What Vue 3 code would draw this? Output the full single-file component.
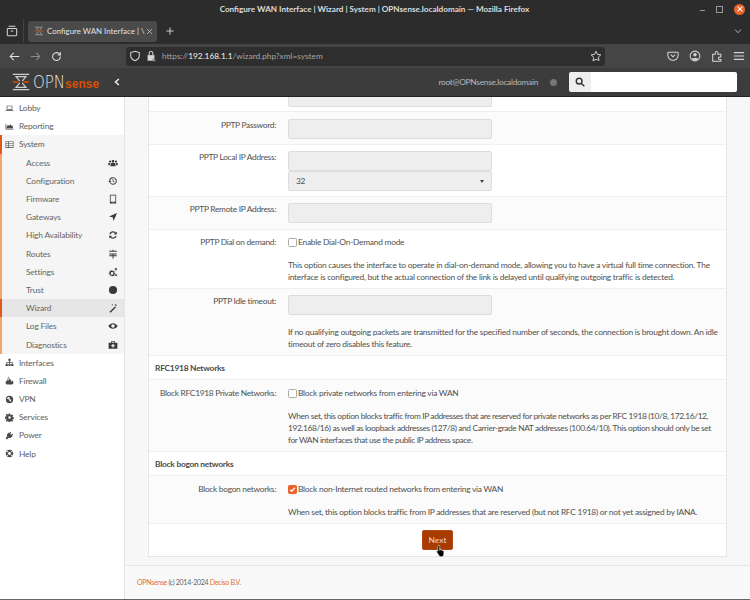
<script setup>
const menu = [
  { label: 'Lobby', icon: 'laptop' },
  { label: 'Reporting', icon: 'chart' },
  { label: 'System', icon: 'server', open: true }
]
const subItems = [
  { label: 'Access', icon: 'users' },
  { label: 'Configuration', icon: 'history' },
  { label: 'Firmware', icon: 'tablet' },
  { label: 'Gateways', icon: 'arrow' },
  { label: 'High Availability', icon: 'refresh' },
  { label: 'Routes', icon: 'routes' },
  { label: 'Settings', icon: 'cogs' },
  { label: 'Trust', icon: 'dot' },
  { label: 'Wizard', icon: 'wand', active: true },
  { label: 'Log Files', icon: 'eye' },
  { label: 'Diagnostics', icon: 'medkit' }
]
const bottomMenu = [
  { label: 'Interfaces', icon: 'sitemap' },
  { label: 'Firewall', icon: 'fire' },
  { label: 'VPN', icon: 'globe' },
  { label: 'Services', icon: 'cog' },
  { label: 'Power', icon: 'plug' },
  { label: 'Help', icon: 'lifering' }
]
const icons = {
  laptop: 'M3 3h10v7H3z M4.2 4.2v4.6h7.6V4.2z M1 11h14v1.4H1z',
  chart: 'M1 3h1.2v9H15v1.2H1z M3 11V8l2.5-3 2 2 2-3 2.5 2.5 2 .5V11z',
  server: 'M1 2h14v12H1z M2 3.2v2.4h3.4V3.2z M2 6.8v2.4h3.4V6.8z M2 10.4v2.4h3.4v-2.4z M6.6 3.2v2.4H14V3.2z M6.6 6.8v2.4H14V6.8z M6.6 10.4v2.4H14v-2.4z',
  users: 'M8 3a2.2 2.2 0 1 1 0 4.4A2.2 2.2 0 0 1 8 3z M3.3 4a1.7 1.7 0 1 1 0 3.4 1.7 1.7 0 0 1 0-3.4z M12.7 4a1.7 1.7 0 1 1 0 3.4 1.7 1.7 0 0 1 0-3.4z M5 8h6l1 2v3H4v-3z M0.5 8h3L3 10v1.5H0.5z M12.5 8h3v3.5H13V10z',
  history: 'M8 2a6 6 0 1 1-5 9.3l1.2-.9A4.5 4.5 0 1 0 3.5 8H5.6L3 10.8.4 8h1.6A6 6 0 0 1 8 2z M7.4 4.8h1.2v3l2 1.4-.7 1-2.5-1.8z',
  tablet: 'M3 1h10v14H3z M4.2 2.4v10h7.6v-10z M7.2 13h1.6v1H7.2z',
  arrow: 'M14.5 1.5 8.8 14.5 7.5 8.5 1.5 7.2z',
  refresh: 'M8 2a6 6 0 0 1 4.4 1.9L14 2.4V7H9.4l1.7-1.7A4 4 0 0 0 4.3 6.6H2.2A6 6 0 0 1 8 2z M2 9h4.6l-1.7 1.7a4 4 0 0 0 6.8-1.3h2.1A6 6 0 0 1 3.6 12.1L2 13.6z',
  routes: 'M7.2 1h1.6v1.6H14v1.6H2V2.6h5.2z M2 7h12v1.6H8.8V10H14v1.6H8.8V15H7.2v-3.4H2V10h5.2V8.6H2z',
  cogs: 'M6 5h1l.4 1.3 1.2.5 1.2-.6.8.8-.6 1.2.5 1.2 1.3.4v1l-1.3.4-.5 1.2.6 1.2-.8.8-1.2-.6-1.2.5L7 15H6l-.4-1.3-1.2-.5-1.2.6-.8-.8.6-1.2-.5-1.2-1.3-.4v-1l1.3-.4.5-1.2-.6-1.2.8-.8 1.2.6 1.2-.5z M6.5 8a2.2 2.2 0 1 0 0 4.4 2.2 2.2 0 0 0 0-4.4z M12.5 1.5a2 2 0 1 1 0 4 2 2 0 0 1 0-4z M12.5 2.7a.8.8 0 1 0 0 1.6.8.8 0 0 0 0-1.6z M13 11a1.8 1.8 0 1 1 0 3.6 1.8 1.8 0 0 1 0-3.6z M13 12.1a.7.7 0 1 0 0 1.4.7.7 0 0 0 0-1.400z',
  dot: 'M8 1.500a6.500 6.500 0 1 1 0 13 6.500 6.500 0 0 1 0-13z',
  wand: 'M11 5.600 12.600 7.200 4 15.400 2.400 13.800z M12.500 1l.7 1.600 1.600.7-1.600.7-.7 1.600-.7-1.600-1.600-.7 1.600-.7z M7 1.500l.4 1 1 .4-1 .4-.4 1-.4-1-1-.4 1-.4z',
  eye: 'M8 3.500c3.400 0 6 2.400 7.500 4.500-1.500 2.100-4.100 4.500-7.500 4.500S2 10.100.5 8C2 5.900 4.600 3.500 8 3.500z M8 5.200a2.800 2.800 0 1 0 0 5.600 2.800 2.800 0 0 0 0-5.600z',
  medkit: 'M5 2h6v2.200h4V14H1V4.200h4z M6.200 3.200v1h3.600v-1z M7 6.500v2H5v1.600h2v2h2v-2h2V8.500H9v-2z',
  sitemap: 'M6 1.500h4v3.500H8.700v2.200h4.800v3.300H15v3.500h-4v-3.500h1.300V8.400H8.700v2.100H10v3.500H6v-3.500h1.300V8.400H3.700v2.100H5v3.500H1v-3.500h1.500V7.200h4.800V5H6z',
  fire: 'M7 1c1 2-2 3.500-2 6 0 .8.300 1.400.8 1.800C5.500 6.800 7.500 5.500 8 4c1.500 1.500 3 3.500 3 5.500 0 .5-.1 1-.3 1.400C12 10 12.500 8.500 12 7c2 1.500 3 3 3 5 0 1.500-1 2.500-2.500 3h-9C2 14.500 1 13.500 1 12c0-2 2-4 3-5 0 1 .2 1.500.5 2C4 5.500 5 2.500 7 1z',
  globe: 'M8 1.500a6.500 6.500 0 1 1 0 13 6.500 6.500 0 0 1 0-13z M5 4 3.500 6l2 1.500 2 .5.5 2 1 2.500 2-3-.5-1.500-2-.5-1-2 1.500-1.500L7.500 3.500z',
  cog: 'M6.800 1h2.400l.4 2 1.500.6 1.700-1.100 1.700 1.700-1.100 1.700.6 1.500 2 .4v2.400l-2 .4-.6 1.500 1.100 1.700-1.700 1.700-1.700-1.100-1.500.6-.4 2H6.800l-.4-2-1.500-.6-1.700 1.100-1.700-1.700 1.100-1.700-.6-1.500-2-.4V6.800l2-.4.6-1.500-1.100-1.700 1.700-1.700 1.700 1.100 1.500-.6z M8 5.800a2.200 2.200 0 1 0 0 4.400 2.200 2.200 0 0 0 0-4.400z',
  plug: 'M10 1.500l1.200 1.200-2 2 2 2 2-2L14.500 6l-2 2 1 1-2.500 2.500c-1.500 1.300-3.300 1.300-4.500.5L3.500 15 1 12.500 4 9.500c-.8-1.200-.8-3 .5-4.500L7 2.500l1 1z',
  lifering: 'M8 1.500a6.500 6.500 0 1 1 0 13 6.500 6.500 0 0 1 0-13z M8 5.500a2.500 2.500 0 1 0 0 5 2.500 2.500 0 0 0 0-5z M3.500 3 2.500 4 5 6.300 6.300 5z M12.500 3 10 5.300 11 6.300 13.500 4z M5 9.700 2.500 12l1 1L6 10.700z M11 9.700 9.700 10.700 12.500 13l1-1z'
}
</script>

<template>
  <div class="window">
    <header class="titlebar">
      <span class="title">Configure WAN Interface | Wizard | System | OPNsense.localdomain — Mozilla Firefox</span>
      <div class="win-controls">
        <span class="win-min"></span>
        <span class="win-max"></span>
        <span class="win-close">
          <svg viewBox="0 0 10 10" width="8" height="8"><path d="M2 2l6 6M8 2l-6 6" stroke="#fff" stroke-width="1.3"/></svg>
        </span>
      </div>
    </header>

    <div class="tabbar">
      <div class="tab-view">
        <svg viewBox="0 0 14 14" width="12" height="12" fill="none" stroke="#d6d6d6" stroke-width="1.2">
          <rect x="1.5" y="4" width="11" height="8.5" rx="1"/>
          <path d="M3 1.5h8M5.5 7h3"/>
        </svg>
      </div>
      <div class="tab">
        <svg class="tab-logo" viewBox="0 0 16 16" width="10" height="10" fill="none">
          <path d="M2 2h12M2 14h12M4 3l3 4M12 3L9 7M4 13l3-4M12 13L9 9" stroke="#9a9a9a" stroke-width="1.5"/>
          <path d="M1 8h5M10 8h5" stroke="#d94f00" stroke-width="1.6"/>
        </svg>
        <span class="tab-label">Configure WAN Interface | \</span>
        <svg class="tab-x" viewBox="0 0 10 10" width="7" height="7" fill="none" stroke="#d6d6d6" stroke-width="1"><path d="M1.5 1.5l7 7M8.5 1.5l-7 7"/></svg>
      </div>
      <svg class="tab-new" viewBox="0 0 10 10" width="8" height="8" stroke="#e0e0e0" stroke-width="1.1"><path d="M5 .5v9M.5 5h9"/></svg>
      <svg class="tab-list" viewBox="0 0 12 12" width="8" height="8" fill="none" stroke="#d6d6d6" stroke-width="1.2"><path d="M1.5 4l4.500 4.500L10.500 4"/></svg>
    </div>

    <div class="navbar">
      <svg viewBox="0 0 14 14" width="11" height="11" fill="none" stroke="#e4e4e4" stroke-width="1.3"><path d="M13 7H1.5M6 2.500L1.500 7 6 11.500"/></svg>
      <svg class="nav-forward" viewBox="0 0 14 14" width="11" height="11" fill="none" stroke="#8a8a8a" stroke-width="1.3"><path d="M1 7h11.5M8 2.500L12.500 7 8 11.500"/></svg>
      <svg class="nav-reload" viewBox="0 0 14 14" width="11" height="11" fill="none" stroke="#e4e4e4" stroke-width="1.3"><path d="M12 7a5 5 0 1 1-1.500-3.500L12 5M12 1.500V5H8.500"/></svg>
      <div class="urlbar">
        <svg viewBox="0 0 14 14" width="12" height="12" fill="none" stroke="#d6d6d6" stroke-width="1.2"><path d="M7 1.500l5 1.500v3.500c0 3-2 5-5 6-3-1-5-3-5-6V3z"/></svg>
        <svg class="lock" viewBox="0 0 14 14" width="12" height="12"><path d="M3 6h8v6.500H3z" fill="#d6d6d6"/><path d="M4.800 6V4a2.200 2.200 0 0 1 4.400 0v2" fill="none" stroke="#d6d6d6" stroke-width="1.2"/><path d="M9 9l4 4H9z" fill="#8a8a8a"/></svg>
        <span class="url"><span class="url-dim">https://</span>192.168.1.1<span class="url-dim">/wizard.php?xml=system</span></span>
        <svg class="star" viewBox="0 0 14 14" width="12" height="12" fill="none" stroke="#d6d6d6" stroke-width="1.1"><path d="M7 1.500l1.700 3.600 3.900.5-2.900 2.700.8 3.900L7 10.800l-3.500 1.900.8-3.900L1.400 5.600l3.900-.5z"/></svg>
      </div>
      <div class="nav-tools">
        <svg viewBox="0 0 14 14" width="12" height="12" fill="none" stroke="#d6d6d6" stroke-width="1.2"><path d="M2 2.500h10a1 1 0 0 1 1 1V6a6 6 0 0 1-12 0V3.500a1 1 0 0 1 1-1z M4.500 5.500L7 8l2.500-2.500"/></svg>
        <svg viewBox="0 0 14 14" width="12" height="12"><circle cx="7" cy="7" r="5.700" fill="none" stroke="#d6d6d6" stroke-width="1.2"/><circle cx="7" cy="5.500" r="2" fill="#d6d6d6"/><path d="M3.300 10.500C4 8.800 10 8.800 10.700 10.500 9 12.300 5 12.300 3.300 10.500z" fill="#d6d6d6"/></svg>
        <svg viewBox="0 0 14 14" width="12" height="12" fill="none" stroke="#d6d6d6" stroke-width="1.2"><path d="M2 5h3V3.200a1.500 1.500 0 0 1 3 0V5h3.500v3.200H10a1.400 1.400 0 0 0 0 2.800h1.500V13H2z"/></svg>
        <svg viewBox="0 0 14 14" width="12" height="12" stroke="#d6d6d6" stroke-width="1.3"><path d="M1 3h12M1 7h12M1 11h12"/></svg>
      </div>
    </div>

    <div class="topbar">
      <div class="brand">
        <svg viewBox="0 0 22 20" width="18" height="18" preserveAspectRatio="none" fill="none">
          <path d="M1 1.500h20M1 18.500h20M4 4h14M4 16h14M5 4l4.500 5M17 4l-4.500 5M5 16l4.500-5M17 16l-4.500-5" stroke="#cfcfcf" stroke-width="1.5"/>
          <path d="M1 10h7M14 10h7" stroke="#d94f00" stroke-width="1.8"/>
        </svg>
        <span class="brand-opn">OPN</span><span class="brand-sense">sense</span>
      </div>
      <svg class="collapse" viewBox="0 0 8 10" width="6" height="8" fill="none" stroke="#eee" stroke-width="2"><path d="M6.500 1L2 5l4.500 4"/></svg>
      <span class="user">root@OPNsense.localdomain</span>
      <span class="status-dot"></span>
      <div class="search">
        <span class="search-addon">
          <svg viewBox="0 0 14 14" width="10" height="10" fill="none" stroke="#333" stroke-width="2"><circle cx="5.8" cy="5.8" r="4"/><path d="M9 9l4 4"/></svg>
        </span>
        <span class="search-input"></span>
      </div>
    </div>

    <div class="body">
      <aside class="sidebar">
        <div v-for="m in menu" :key="m.label" class="menu-item" :class="{ 'menu-open': m.open }">
          <svg class="menu-icon" viewBox="0 0 16 16" fill-rule="evenodd"><path :d="icons[m.icon]"/></svg>
          <span>{{ m.label }}</span>
        </div>
        <div class="submenu">
          <div v-for="s in subItems" :key="s.label" class="sub-item" :class="{ 'sub-active': s.active }">
            <span>{{ s.label }}</span>
            <svg class="sub-icon" viewBox="0 0 16 16" fill-rule="evenodd"><path :d="icons[s.icon]"/></svg>
          </div>
        </div>
        <div v-for="m in bottomMenu" :key="m.label" class="menu-item">
          <svg class="menu-icon" viewBox="0 0 16 16" fill-rule="evenodd"><path :d="icons[m.icon]"/></svg>
          <span>{{ m.label }}</span>
        </div>
      </aside>

      <main class="content">
        <section class="card">
          <div class="row row-cut">
            <div class="row-label"></div>
            <div class="row-field"><div class="input input-cut"></div></div>
          </div>
          <div class="row alt row-password">
            <div class="row-label">PPTP Password:</div>
            <div class="row-field"><div class="input"></div></div>
          </div>
          <div class="row">
            <div class="row-label">PPTP Local IP Address:</div>
            <div class="row-field">
              <div class="input"></div>
              <div class="input select"><span>32</span><i class="caret"></i></div>
            </div>
          </div>
          <div class="row alt row-remote">
            <div class="row-label">PPTP Remote IP Address:</div>
            <div class="row-field"><div class="input"></div></div>
          </div>
          <div class="row">
            <div class="row-label">PPTP Dial on demand:</div>
            <div class="row-field">
              <label class="check"><i class="box"></i>Enable Dial-On-Demand mode</label>
              <p class="help">This option causes the interface to operate in dial-on-demand mode, allowing you to have a virtual full time connection. The interface is configured, but the actual connection of the link is delayed until qualifying outgoing traffic is detected.</p>
            </div>
          </div>
          <div class="row alt">
            <div class="row-label">PPTP Idle timeout:</div>
            <div class="row-field">
              <div class="input"></div>
              <p class="help">If no qualifying outgoing packets are transmitted for the specified number of seconds, the connection is brought down. An idle timeout of zero disables this feature.</p>
            </div>
          </div>
          <h3 class="section">RFC1918 Networks</h3>
          <div class="row alt row-boxed">
            <div class="row-label">Block RFC1918 Private Networks:</div>
            <div class="row-field">
              <label class="check"><i class="box"></i>Block private networks from entering via WAN</label>
              <p class="help help-tight">When set, this option blocks traffic from IP addresses that are reserved for private networks as per RFC 1918 (10/8, 172.16/12,<br>192.168/16) as well as loopback addresses (127/8) and Carrier-grade NAT addresses (100.64/10). This option should only be set<br>for WAN interfaces that use the public IP address space.</p>
            </div>
          </div>
          <h3 class="section">Block bogon networks</h3>
          <div class="row alt row-boxed">
            <div class="row-label">Block bogon networks:</div>
            <div class="row-field">
              <label class="check"><i class="box box-on"><svg viewBox="0 0 10 10" width="7" height="7" fill="none" stroke="#fff" stroke-width="1.8"><path d="M1.500 5.200l2.300 2.300 4.700-5"/></svg></i>Block non-Internet routed networks from entering via WAN</label>
              <p class="help">When set, this option blocks traffic from IP addresses that are reserved (but not RFC 1918) or not yet assigned by IANA.</p>
            </div>
          </div>
          <div class="actions">
            <button class="next">Next</button>
            <svg class="pointer" viewBox="0 0 16 18" width="12" height="14"><path d="M5 1.500c.8 0 1.300.6 1.300 1.300V8l.6-.1V7c.9-.4 1.500 0 1.600.8.800-.4 1.500 0 1.600.8.900-.4 1.700 0 1.700 1V13c0 2-1 3.500-3 3.500H8c-1.500 0-2.300-.7-3-2L2 10c-.4-.8.500-1.700 1.500-1l.2.200V2.800c0-.7.500-1.300 1.300-1.300z" fill="#000" stroke="#fff" stroke-width=".8"/></svg>
          </div>
        </section>
        <footer class="foot"><a>OPNsense</a> (c) 2014-2024 <a>Deciso B.V.</a></footer>
      </main>
    </div>
  </div>
</template>

<style>
html, body { margin: 0; background: #f7f7f7; overflow: hidden; }
</style>

<style scoped>
.window {
  width: 750px;
  height: 600px;
  display: flex;
  flex-direction: column;
  overflow: hidden;
  box-sizing: border-box;
  border-bottom: 1px solid #666;
  font-family: Lato, "Noto Sans", sans-serif;
  font-size: 8.4px;
  letter-spacing: -0.25px;
  color: #505050;
}
svg { display: block; flex: none; }

.titlebar {
  height: 18px;
  flex: none;
  background: #2c2c2c;
  color: #dcdcdc;
  font-size: 8.3px;
  font-weight: 700;
  letter-spacing: 0;
  display: flex;
  align-items: center;
  justify-content: center;
  position: relative;
}
.title { font-size: 8.15px; margin-right: 1px; }
.win-controls {
  position: absolute;
  right: 5px;
  top: 0;
  height: 18px;
  display: flex;
  align-items: center;
  gap: 11px;
}
.win-min { width: 5px; height: 1px; background: #999; margin-top: 2px; }
.win-max { width: 5px; height: 5px; border: 1px solid #999; }
.win-close {
  width: 11px;
  height: 11px;
  border-radius: 50%;
  background: #e9622a;
  display: flex;
  align-items: center;
  justify-content: center;
}

.tabbar {
  height: 26px;
  flex: none;
  background: #2c2c2c;
  display: flex;
  align-items: center;
}
.tab-view {
  width: 24px;
  height: 24px;
  display: flex;
  align-items: center;
  justify-content: center;
  border-right: 1px solid #444;
  box-sizing: border-box;
}
.tab {
  width: 129px;
  height: 21px;
  margin-left: 4px;
  background: #4a4a4a;
  border-radius: 3px;
  display: flex;
  align-items: center;
  box-sizing: border-box;
  padding: 0 5px 0 6px;
  color: #e0e0e0;
  font-size: 7.9px;
  letter-spacing: 0;
}
.tab-label { margin-left: 3px; flex: 1; white-space: nowrap; }
.tab-x { margin-left: 1px; }
.tab-new { margin-left: 9px; }
.tab-list { margin-left: auto; margin-right: 8px; }

.navbar {
  height: 24px;
  flex: none;
  background: #454545;
  display: flex;
  align-items: center;
  padding: 0 0 0 9px;
  box-sizing: border-box;
}
.nav-forward { margin-left: 10px; }
.nav-reload { margin-left: 10px; }
.urlbar {
  width: 479px;
  height: 19px;
  margin-left: 64px;
  background: #2e2e2e;
  border-radius: 3px;
  display: flex;
  align-items: center;
  padding: 0 3px;
  box-sizing: border-box;
}
.lock { margin-left: 4px; }
.url {
  margin-left: 5px;
  color: #f0f0f0;
  font-size: 8.3px;
  letter-spacing: 0;
}
.url-dim { color: #a4a4a4; }
.star { margin-left: auto; }
.nav-tools {
  display: flex;
  gap: 10px;
  margin-left: 62px;
}

.topbar {
  height: 29px;
  flex: none;
  background: #3c3c3c;
  border-bottom: 1px solid #222;
  box-sizing: border-box;
  display: flex;
  align-items: center;
  color: #c8c8c8;
}
.brand {
  display: flex;
  align-items: center;
  margin-left: 12px;
  width: 93px;
  height: 20px;
}
.brand-opn {
  margin-left: 3px;
  font-family: "DejaVu Sans", sans-serif;
  font-size: 15px;
  font-weight: 200;
  color: #e6e6e6;
  letter-spacing: 0;
  transform-origin: left center;
  transform: scaleY(1.2);
}
.brand-sense {
  font-family: "Liberation Sans", sans-serif;
  font-weight: 700;
  font-size: 12px;
  letter-spacing: 0;
  color: #d94f00;
  margin-top: 4px;
}
.collapse { margin-left: 9px; }
.user { margin-left: auto; color: #b8b8b8; letter-spacing: -0.3px; }
.status-dot {
  width: 7px;
  height: 7px;
  border-radius: 50%;
  background: #777;
  margin-left: 12px;
}
.search {
  display: flex;
  width: 168px;
  height: 20px;
  margin-left: 12px;
  margin-right: 13px;
}
.search-addon {
  width: 22px;
  background: #eee;
  display: flex;
  align-items: center;
  justify-content: center;
  border-radius: 2px 0 0 2px;
}
.search-input { flex: 1; background: #fff; border-radius: 0 2px 2px 0; }

.body { flex: 1; display: flex; min-height: 0; }
.sidebar {
  width: 125px;
  flex: none;
  background: #fff;
  border-right: 1px solid #e5e5e5;
  box-sizing: border-box;
  padding-top: 2px;
  color: #5e5e5e;
  letter-spacing: -0.17px;
}
.menu-item {
  height: 18.2px;
  display: flex;
  align-items: center;
  padding-left: 5px;
  gap: 5px;
}
.menu-open {
  background: #f5f5f5;
  box-shadow: inset 2px 0 0 #e2571c;
}
.menu-icon { width: 9px; height: 9px; fill: #4a4a4a; }
.submenu { background: #f5f5f5; box-shadow: inset 2px 0 0 #f4a36b; }
.sub-item {
  height: 18.2px;
  display: flex;
  align-items: center;
  justify-content: space-between;
  padding: 0 6px 0 26px;
  color: #666;
}
.sub-active {
  background: #e6e6e6;
  box-shadow: inset 2px 0 0 #e2571c;
}
.sub-icon { width: 10px; height: 10px; fill: #3a3a3a; }

.content {
  flex: 1;
  background: #f7f7f7;
  min-width: 0;
  display: flex;
  flex-direction: column;
  padding: 0 23px;
  box-sizing: border-box;
}
.card {
  background: #fff;
  border: 1px solid #e6e6e6;
  border-top: 0;
  box-sizing: border-box;
  flex: none;
}
.row {
  display: flex;
  border-bottom: 1px solid #efefef;
  padding: 6px 0 5px;
}
.row-cut { height: 15px; padding: 0; box-sizing: border-box; }
.row-password { padding: 7px 0 5px; }
.row-remote { padding-bottom: 6px; }
.row-boxed { padding-top: 7px; }
.alt { background: #fbfbfb; }
.row-label {
  width: 127px;
  text-align: right;
  flex: none;
  line-height: 12px;
  letter-spacing: -0.3px;
  white-space: nowrap;
}
.row-field { margin-left: 12px; flex: 1; padding-right: 8px; min-width: 0; }
.input {
  width: 204px;
  height: 20px;
  background: #eee;
  border: 1px solid #ddd;
  border-radius: 2px;
  box-sizing: border-box;
}
.input-cut { height: 10px; border-top: 0; border-radius: 0 0 2px 2px; }
.select {
  display: flex;
  align-items: center;
  justify-content: space-between;
  padding: 0 7px;
}
.caret {
  width: 0;
  height: 0;
  border-left: 2.5px solid transparent;
  border-right: 2.5px solid transparent;
  border-top: 3px solid #444;
}
.check {
  display: flex;
  align-items: center;
  height: 12px;
}
.box {
  width: 7px;
  height: 7px;
  background: #fff;
  border: 1px solid #aaa;
  border-radius: 1.5px;
  margin-right: 1px;
  display: flex;
  align-items: center;
  justify-content: center;
}
.box-on { background: #e9622a; border-color: #e9622a; }
.help {
  margin: 11px 0 0;
  line-height: 12px;
}
.help-tight { letter-spacing: -0.38px; white-space: nowrap; }
.section {
  margin: 0;
  font-size: 8.4px;
  font-weight: 700;
  color: #4a4a4a;
  height: 24px;
  line-height: 24px;
  padding-left: 6px;
  box-sizing: border-box;
  border-bottom: 1px solid #efefef;
}
.actions {
  display: flex;
  justify-content: center;
  padding: 6px 0;
  position: relative;
}
.next {
  width: 31px;
  height: 20px;
  padding: 0;
  background: #a83c00;
  color: #f2d9c9;
  border: 1px solid #b4480f;
  border-radius: 2px;
  font: inherit;
}
.pointer { position: absolute; left: 286px; top: 20px; }
.foot {
  margin: auto -23px 0;
  height: 34px;
  line-height: 33px;
  padding-left: 12px;
  background: #f9f9f9;
  border-top: 1px solid #e5e5e5;
  box-sizing: border-box;
  font-size: 7px;
  letter-spacing: -0.3px;
  color: #666;
}
.foot a { color: #e2702a; }
</style>
